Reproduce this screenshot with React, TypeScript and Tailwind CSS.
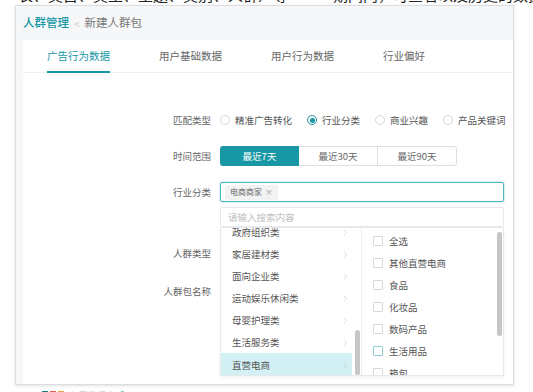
import React from 'react';
import { ChevronRight } from 'lucide-react';

const categories = ['政府组织类', '家居建材类', '面向企业类', '运动娱乐休闲类', '母婴护理类', '生活服务类', '直营电商'];
const subItems = ['全选', '其他直营电商', '食品', '化妆品', '数码产品', '生活用品', '箱包'];
const tabs = ['广告行为数据', '用户基础数据', '用户行为数据', '行业偏好'];

const Radio: React.FC<{ checked?: boolean; label: string }> = ({ checked, label }) => (
  <div className="flex items-center gap-[5px]">
    {checked ? (
      <span className="w-[10px] h-[10px] rounded-full border border-[#1898a5] flex items-center justify-center">
        <span className="w-[5px] h-[5px] rounded-full bg-[#1898a5]" />
      </span>
    ) : (
      <span className="w-[10px] h-[10px] rounded-full border border-[#d6d6d6] bg-white" />
    )}
    <span className="text-[#555]">{label}</span>
  </div>
);

export default function App() {
  return (
    <div className="w-[533px] h-[392px] overflow-hidden bg-white font-['Noto_Sans_CJK_SC','Noto_Sans',sans-serif]">
      {/* cut-off line of the surrounding document */}
      <div className="h-[5px] overflow-hidden pl-[18px]">
        <div className="-mt-[14px] text-[15px] leading-[18px] text-[#222] whitespace-nowrap">
          表、类目、类型、主题、类别、人群）等一一一期间内，可查看以及历史的数据
        </div>
      </div>

      <div className="ml-[15px] w-[499px] h-[380px] border border-[#dcdde0] shadow-[0_1px_3px_rgba(0,0,0,0.12)] bg-[#f6f7f9] flex flex-col">
        {/* breadcrumb */}
        <div className="h-[34px] flex items-center pl-[7px] text-[11.5px]">
          <span className="text-[#1898a5] font-medium">人群管理</span>
          <span className="mx-[5px] text-[#c8c8c8] text-[10px]">&lt;</span>
          <span className="text-[#777]">新建人群包</span>
        </div>

        <div className="ml-[7px] flex-1 bg-white rounded-tl-[3px] text-[9.5px]">
          {/* tabs */}
          <div className="h-[33px] flex pl-[24px] border-b border-[#eef0f2]">
            {tabs.map((t, i) => (
              <div key={t} className="w-[112px] h-full flex">
                <span
                  className={`relative h-full flex items-center text-[10.5px] ${i === 0 ? 'text-[#1898a5]' : 'text-[#666]'}`}
                >
                  {t}
                  {i === 0 && <span className="absolute left-0 right-0 -bottom-[1px] h-[2px] bg-[#1898a5]" />}
                </span>
              </div>
            ))}
          </div>

          {/* form */}
          <div className="pt-[37px]">
            <div className="flex items-center h-[20px]">
              <div className="w-[188px] text-right text-[#666]">匹配类型</div>
              <div className="ml-[9px] flex items-center gap-[15px] whitespace-nowrap">
                <Radio label="精准广告转化" />
                <Radio checked label="行业分类" />
                <Radio label="商业兴趣" />
                <Radio label="产品关键词" />
              </div>
            </div>

            <div className="flex items-center h-[20px] mt-[16px]">
              <div className="w-[188px] text-right text-[#666]">时间范围</div>
              <div className="ml-[9px] flex h-[20px]">
                <div className="w-[79px] flex items-center justify-center bg-[#1898a5] text-white rounded-l-[3px]">最近7天</div>
                <div className="w-[79px] flex items-center justify-center border-y border-r border-[#dcdfe3] text-[#666]">最近30天</div>
                <div className="w-[79px] flex items-center justify-center border-y border-r border-[#dcdfe3] text-[#666] rounded-r-[3px]">最近90天</div>
              </div>
            </div>

            <div className="flex items-center h-[20px] mt-[16px] relative z-10">
              <div className="w-[188px] text-right text-[#666]">行业分类</div>
              <div className="ml-[9px] relative w-[284px] h-[20px]">
                <div className="h-full border border-[#4db8bf] rounded-[2px] shadow-[0_0_0_1px_rgba(24,152,165,0.15)] flex items-center pl-[4px] bg-white">
                  <span className="h-[15px] px-[5px] flex items-center gap-[3px] bg-[#f1f2f4] rounded-[2px] text-[8px] text-[#666]">
                    电商商家 <span className="text-[#999]">×</span>
                  </span>
                </div>

                {/* cascader dropdown */}
                <div className="absolute top-[25px] left-0 w-[284px]">
                  <div className="h-[20px] border border-[#e6e8eb] rounded-[2px] bg-white flex items-center pl-[7px] text-[#c0c0c0]">
                    请输入搜索内容
                  </div>
                  <div className="h-[149px] border border-[#e6e8eb] bg-white flex shadow-[0_2px_4px_rgba(0,0,0,0.05)]">
                    <div className="w-[141px] flex border-r border-[#eceef0]">
                      <div className="w-[131px] overflow-hidden">
                        <div className="-mt-[7px]">
                          {categories.map((c, i) => (
                            <div
                              key={c}
                              className={`h-[22px] flex items-center justify-between pl-[11px] pr-[2px] text-[#555] ${i === categories.length - 1 ? 'bg-[#d3f1f4] h-[24px]' : ''}`}
                            >
                              <span>{c}</span>
                              <ChevronRight size={9} strokeWidth={1.5} className="text-[#bbb]" />
                            </div>
                          ))}
                        </div>
                      </div>
                      <div className="w-[9px] relative">
                        <div className="absolute top-[102px] left-[3px] w-[5px] h-[45px] rounded-full bg-[#c6c6c6]" />
                      </div>
                    </div>
                    <div className="flex-1 relative overflow-hidden pt-[2px]">
                      {subItems.map((s, i) => (
                        <div key={s} className="h-[22px] flex items-center pl-[11px] gap-[6px] text-[#555]">
                          <span
                            className={`w-[10px] h-[10px] rounded-[1px] border bg-white ${i === 5 ? 'border-[#8fd0d5]' : 'border-[#d9d9d9]'}`}
                          />
                          <span>{s}</span>
                        </div>
                      ))}
                      <div className="absolute top-[4px] right-[1px] w-[5px] h-[104px] rounded-full bg-[#c6c6c6]" />
                    </div>
                  </div>
                </div>
              </div>
            </div>

            <div className="flex items-center h-[20px] mt-[41px]">
              <div className="w-[188px] text-right text-[#666]">人群类型</div>
            </div>
            <div className="flex items-center h-[20px] mt-[18px]">
              <div className="w-[188px] text-right text-[#666]">人群包名称</div>
            </div>
          </div>
        </div>
      </div>

      {/* cut-off row beneath the frame */}
      <div className="mt-[6px] pl-[42px] flex items-start gap-[2px]">
        <span className="w-[6px] h-[6px] bg-[#167f86]" />
        <span className="w-[6px] h-[6px] bg-[#e05a5a]" />
        <span className="w-[6px] h-[6px] bg-[#f0a040]" />
        <span className="ml-[4px] text-[9px] leading-[9px] text-[#bbb]">加载数据中</span>
        <span className="ml-[4px] w-[3px] h-[6px] bg-[#7cc]" />
      </div>
    </div>
  );
}
